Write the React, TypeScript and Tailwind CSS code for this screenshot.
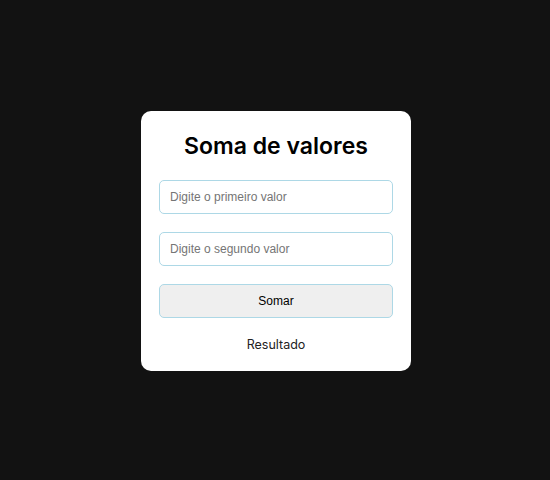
import React from 'react';

const App = () => {
  return (
    <div className="min-h-screen w-full flex items-center justify-center bg-[#121212]">
      <div className="w-[270px] ml-[2px] mt-[2px] bg-white rounded-[10px] px-[18px] pt-[18px] pb-[16px] flex flex-col">
        <h1
          className="h-[34px] flex items-center justify-center text-[23px] font-semibold text-black"
          style={{ fontFamily: 'Inter, sans-serif' }}
        >
          Soma de valores
        </h1>
        <div className="mt-[17px] flex flex-col gap-[18px]" style={{ fontFamily: '"Liberation Sans", Arial, sans-serif' }}>
          <input
            type="text"
            placeholder="Digite o primeiro valor"
            className="h-[34px] w-full rounded-[5px] border border-[#add8e6] px-[10px] text-[12px] text-black placeholder:text-[#757575] outline-none bg-white"
          />
          <input
            type="text"
            placeholder="Digite o segundo valor"
            className="h-[34px] w-full rounded-[5px] border border-[#add8e6] px-[10px] text-[12px] text-black placeholder:text-[#757575] outline-none bg-white"
          />
          <button className="h-[34px] w-full rounded-[5px] border border-[#add8e6] bg-[#efefef] text-[12px] text-black">
            Somar
          </button>
        </div>
        <p
          className="mt-[17px] h-[20px] flex items-center justify-center text-[12.5px] text-[#222]"
          style={{ fontFamily: 'Inter, sans-serif' }}
        >
          Resultado
        </p>
      </div>
    </div>
  );
};

export default App;
